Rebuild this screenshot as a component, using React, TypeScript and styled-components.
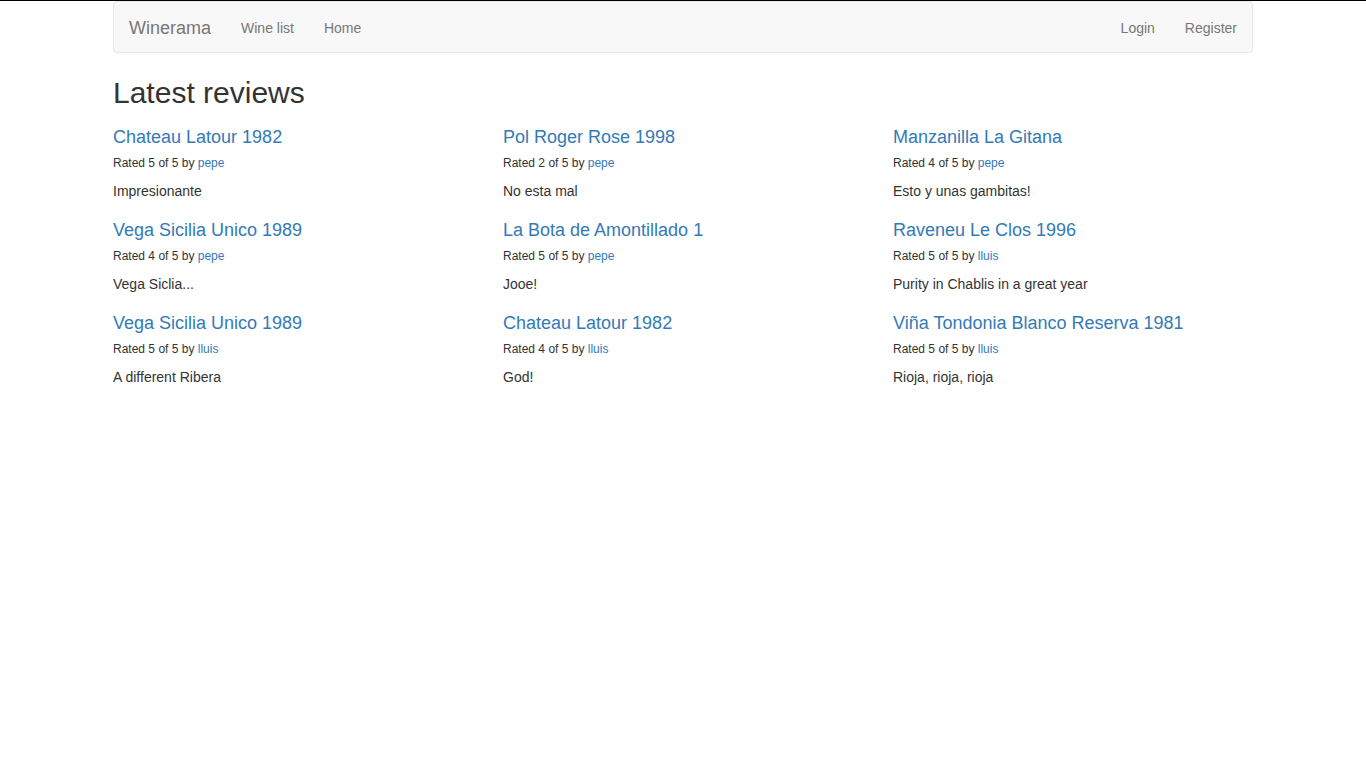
import React from "react";
import styled, { createGlobalStyle } from "styled-components";

const Global = createGlobalStyle`
  * { box-sizing: border-box; }
  html, body { margin: 0; padding: 0; }
  body {
    font-family: "Liberation Sans", Arial, Helvetica, sans-serif;
    font-size: 14px;
    line-height: 1.42857143;
    color: #333;
    background: #fff;
    border-top: 1px solid #000;
  }
  a { color: #337ab7; text-decoration: none; }
`;

const Container = styled.div`
  width: 1170px;
  margin: 0 auto;
  padding: 0 15px;
`;

const Navbar = styled.nav`
  display: flex;
  justify-content: space-between;
  min-height: 50px;
  margin-bottom: 20px;
  background: #f8f8f8;
  border: 1px solid #e7e7e7;
  border-radius: 4px;
  padding: 0 15px;
`;

const NavGroup = styled.div<{ $right?: boolean }>`
  display: flex;
  align-items: stretch;
  margin-right: ${(p) => (p.$right ? "-15px" : "0")};
`;

const Brand = styled.a`
  display: block;
  height: 50px;
  padding: 16px 15px 14px;
  margin-left: -15px;
  font-size: 18px;
  line-height: 20px;
  color: #777;
`;

const NavLink = styled.a`
  display: block;
  padding: 16px 15px 14px;
  line-height: 20px;
  color: #777;
`;

const Title = styled.h2`
  font-size: 30px;
  font-weight: 500;
  line-height: 1.1;
  margin: 20px 0 7px;
  padding-top: 3px;
`;

const Grid = styled.div`
  display: grid;
  grid-template-columns: repeat(3, 1fr);
  margin: 0 -15px;
`;

const Review = styled.div`
  display: flex;
  flex-direction: column;
  align-items: flex-start;
  padding: 0 15px;
`;

const WineName = styled.h4`
  font-size: 18px;
  font-weight: 500;
  line-height: 1.1;
  margin: 10px 0 0;
  padding-top: 2px;
`;

const Meta = styled.h6`
  font-size: 12px;
  font-weight: 500;
  line-height: 1.1;
  margin: 9px 0 0;
`;

const Comment = styled.p`
  margin: 11px 0 8px;
`;

const reviews = [
  { wine: "Chateau Latour 1982", rating: 5, user: "pepe", text: "Impresionante" },
  { wine: "Pol Roger Rose 1998", rating: 2, user: "pepe", text: "No esta mal" },
  { wine: "Manzanilla La Gitana", rating: 4, user: "pepe", text: "Esto y unas gambitas!" },
  { wine: "Vega Sicilia Unico 1989", rating: 4, user: "pepe", text: "Vega Siclia..." },
  { wine: "La Bota de Amontillado 1", rating: 5, user: "pepe", text: "Jooe!" },
  { wine: "Raveneu Le Clos 1996", rating: 5, user: "lluis", text: "Purity in Chablis in a great year" },
  { wine: "Vega Sicilia Unico 1989", rating: 5, user: "lluis", text: "A different Ribera" },
  { wine: "Chateau Latour 1982", rating: 4, user: "lluis", text: "God!" },
  { wine: "Viña Tondonia Blanco Reserva 1981", rating: 5, user: "lluis", text: "Rioja, rioja, rioja" },
];

export default function App() {
  return (
    <>
      <Global />
      <Container>
        <Navbar>
          <NavGroup>
            <Brand href="#">Winerama</Brand>
            <NavLink href="#">Wine list</NavLink>
            <NavLink href="#">Home</NavLink>
          </NavGroup>
          <NavGroup $right>
            <NavLink href="#">Login</NavLink>
            <NavLink href="#">Register</NavLink>
          </NavGroup>
        </Navbar>
        <Title>Latest reviews</Title>
        <Grid>
          {reviews.map((r, i) => (
            <Review key={i}>
              <WineName>
                <a href="#">{r.wine}</a>
              </WineName>
              <Meta>
                Rated {r.rating} of 5 by <a href="#">{r.user}</a>
              </Meta>
              <Comment>{r.text}</Comment>
            </Review>
          ))}
        </Grid>
      </Container>
    </>
  );
}
